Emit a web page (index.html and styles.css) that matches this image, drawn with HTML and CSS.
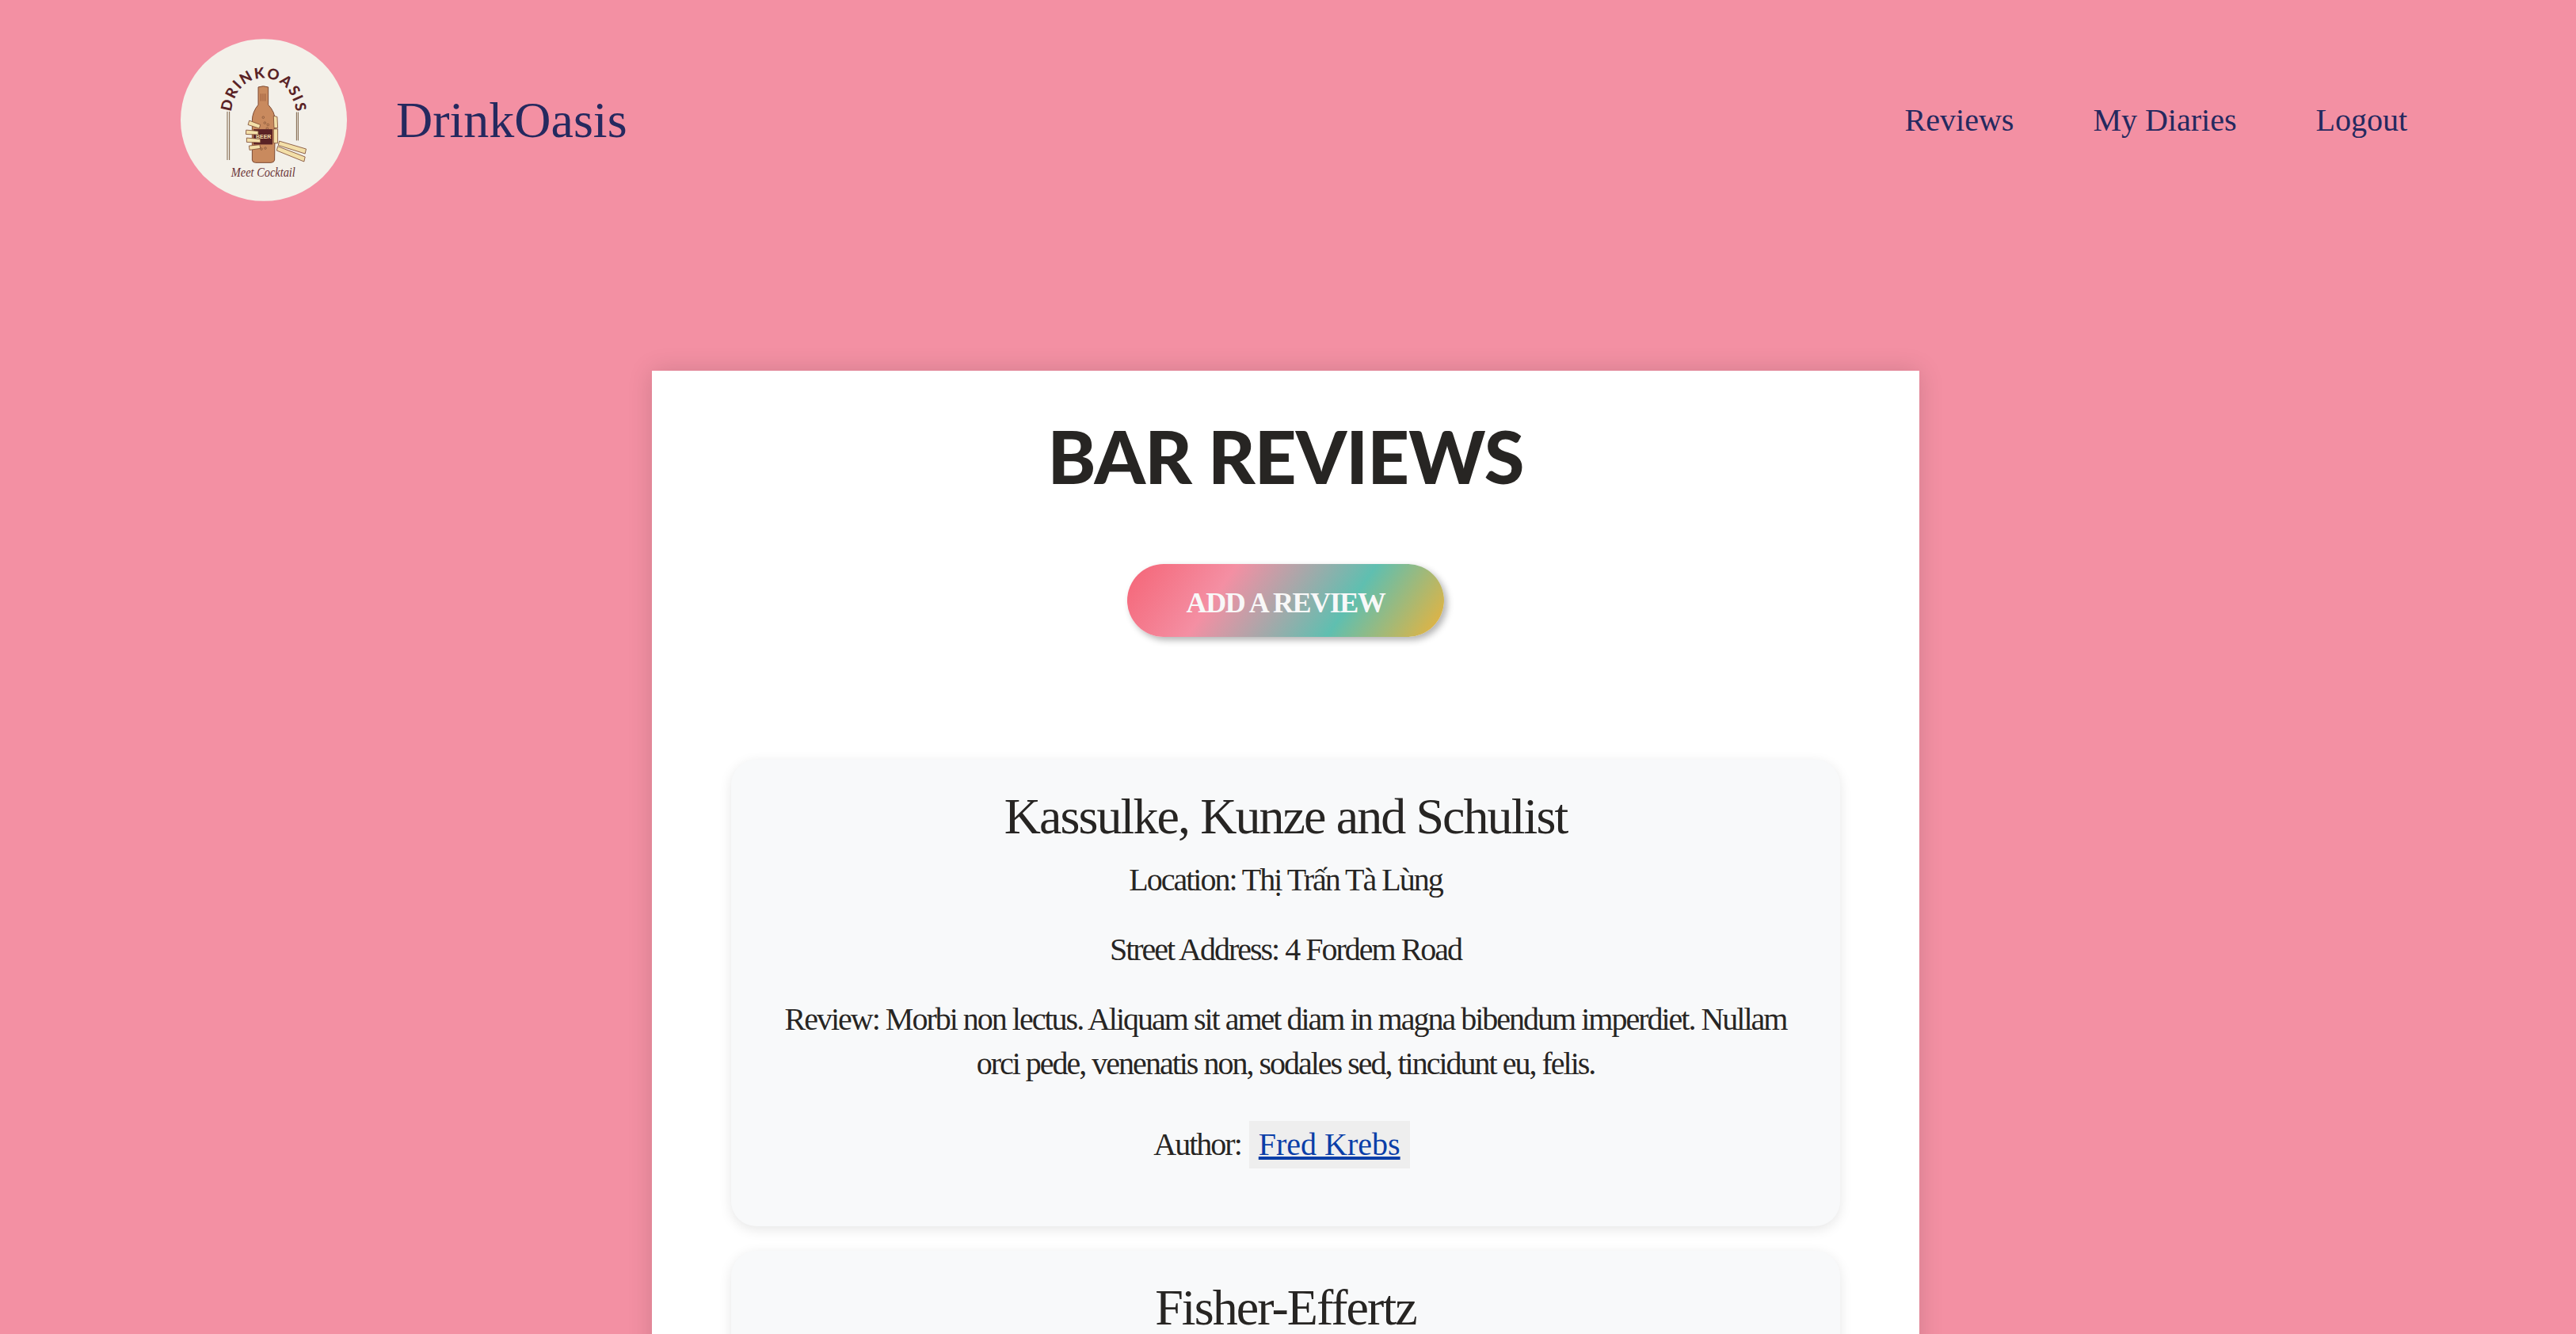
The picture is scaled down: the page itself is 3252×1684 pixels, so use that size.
FILE: index.html
```html
<!doctype html>
<html>
<head>
<meta charset="utf-8">
<title>DrinkOasis</title>
<link rel="stylesheet" href="styles.css">
</head>

<body>
	<header class="nav">
		<div class="brand">
			<svg class="logo" viewBox="23 12 632 616" aria-label="DrinkOasis logo">
				<ellipse cx="339" cy="320" rx="316" ry="308" fill="#f3f0e9"/>
				<defs>
					<path id="arc" d="M222 330 A116 116 0 0 1 228 240 A116 116 0 0 1 448 240 A116 116 0 0 1 454 330"/>
				</defs>
				<text class="logo-name" text-anchor="middle"><textPath href="#arc" startOffset="50%" textLength="390" lengthAdjust="spacing">DRINKOASIS</textPath></text>
				<g fill="#7d6247">
					<rect x="199" y="288" width="3" height="184"/>
					<rect x="207" y="288" width="3" height="184"/>
					<rect x="462" y="290" width="3" height="108"/>
					<rect x="468" y="290" width="3" height="108"/>
				</g>
				<path d="M318 195 Q337 188 356 195 L356 262 Q382 290 382 322 L380 472 Q378 482 366 482 L308 482 Q296 482 295 472 L295 322 Q295 290 318 262 Z" fill="#c98a5e" stroke="#7c4a33" stroke-width="3"/>
				<path d="M328 220 V248 M336 220 V248 M344 220 V248" stroke="#9c5c3c" stroke-width="3"/>
				<g fill="none" stroke="#8a5a3c" stroke-width="2.5">
					<circle cx="337" cy="310" r="4"/>
					<circle cx="343" cy="331" r="4"/>
					<circle cx="355" cy="338" r="4"/>
					<circle cx="352" cy="352" r="4"/>
					<circle cx="345" cy="427" r="4"/>
					<circle cx="330" cy="430" r="4"/>
				</g>
				<rect x="300" y="355" width="72" height="58" fill="#5a2326"/>
				<text class="logo-beer" x="338" y="391" text-anchor="middle">BEER</text>
				<g fill="#f3dfa8" stroke="#7c4a33" stroke-width="2.5">
					<path d="M284 322 L326 338 L322 352 L279 338 Z"/>
					<path d="M272 358 L318 362 L318 376 L271 374 Z"/>
					<path d="M274 388 L326 392 L326 406 L274 404 Z"/>
					<path d="M283 418 L324 414 L326 428 L285 434 Z"/>
					<path d="M376 304 L390 308 L392 350 L378 350 Z"/>
					<path d="M376 354 L392 354 L392 408 L376 408 Z"/>
					<path d="M398 400 L500 430 L496 448 L394 416 Z"/>
					<path d="M392 420 L496 460 L492 478 L388 436 Z"/>
				</g>
				<text class="logo-tag" x="337" y="535" text-anchor="middle" textLength="244" lengthAdjust="spacingAndGlyphs">Meet Cocktail</text>
			</svg>
			<a class="brand-name" href="#">DrinkOasis</a>
		</div>
		<nav class="links">
			<a href="#">Reviews</a>
			<a href="#">My Diaries</a>
			<a href="#">Logout</a>
		</nav>
	</header>

	<main class="page">
		<h1 class="title">BAR REVIEWS</h1>
		<a class="add-btn" href="#">ADD A REVIEW</a>

		<section class="review first">
			<h2>Kassulke, Kunze and Schulist</h2>
			<p>Location: Thị Trấn Tà Lùng</p>
			<p>Street Address: 4 Fordem Road</p>
			<p>Review: Morbi non lectus. Aliquam sit amet diam in magna bibendum imperdiet. Nullam orci pede, venenatis non, sodales sed, tincidunt eu, felis.</p>
			<p class="author">Author: <a href="#">Fred Krebs</a></p>
		</section>

		<section class="review">
			<h2>Fisher-Effertz</h2>
		</section>
	</main>
</body>
</html>
```

FILE: styles.css
```css
*{
	margin: 0;
	padding: 0;
	box-sizing: border-box;
}
html, body{
	height: 100%;
	overflow: hidden;
}
body{
	background: #f390a3;
	font-family: "Liberation Serif", serif;
	color: #272523;
}
a{
	color: inherit;
	text-decoration: none;
}

.nav{
	display: flex;
	justify-content: space-between;
	align-items: center;
	height: 205px;
	margin-top: 49px;
	padding: 0 213px 0 228px;
	color: #25295f;
}
.brand{
	display: flex;
	align-items: center;
	gap: 62px;
}
.logo{
	width: 210px;
	height: 205px;
}
.logo-name{
	font-family: Lato, sans-serif;
	font-weight: 900;
	font-size: 56px;
	fill: #5a2326;
}
.logo-beer{
	font-family: "Liberation Sans", sans-serif;
	font-weight: 700;
	font-size: 21px;
	fill: #f3dfa8;
}
.logo-tag{
	font-family: "Liberation Serif", serif;
	font-style: italic;
	font-size: 52px;
	fill: #6a3436;
}
.brand-name{
	font-size: 64px;
}
.links{
	display: flex;
	gap: 100px;
	font-size: 40px;
}

.page{
	width: 1600px;
	margin: 214px 0 0 823px;
	padding: 0 100px;
	background: #fff;
	text-align: center;
	box-shadow: 0 0 30px rgba(0,0,0,0.14);
}
.title{
	padding-top: 52px;
	font-family: Lato, sans-serif;
	font-weight: 900;
	font-size: 92px;
	line-height: 112px;
	letter-spacing: -0.01em;
}
.add-btn{
	display: block;
	width: 400px;
	height: 92px;
	margin: 80px auto 0;
	border-radius: 46px;
	background: linear-gradient(125deg, #f56476 0%, #f48fa3 30%, #5fbfb0 68%, #d9b44a 95%);
	box-shadow: 4px 4px 8px rgba(0,0,0,0.3);
	color: #f8f8f8;
	font-size: 36px;
	font-weight: 700;
	line-height: 98px;
	letter-spacing: -0.04em;
}

.review{
	margin-top: 31px;
	padding: 36px 60px 40px;
	background: #f8f9fa;
	border-radius: 32px;
	box-shadow: 0 4px 16px rgba(0,0,0,0.1);
	font-size: 40px;
	line-height: 56px;
	letter-spacing: -0.05em;
}
.first{
	height: 589px;
	margin-top: 155px;
}
.review h2{
	font-size: 64px;
	font-weight: 400;
	line-height: 72px;
	letter-spacing: -0.03em;
}
.review p{
	margin-top: 32px;
}
.review h2 + p{
	margin-top: 16px;
}
.review .author{
	margin-top: 44px;
}
.author a{
	display: inline-block;
	margin: 0 10px 0 2px;
	padding: 2px 12px;
	background: #eee;
	color: #0a3ea8;
	text-decoration: underline;
	letter-spacing: 0;
}
```
